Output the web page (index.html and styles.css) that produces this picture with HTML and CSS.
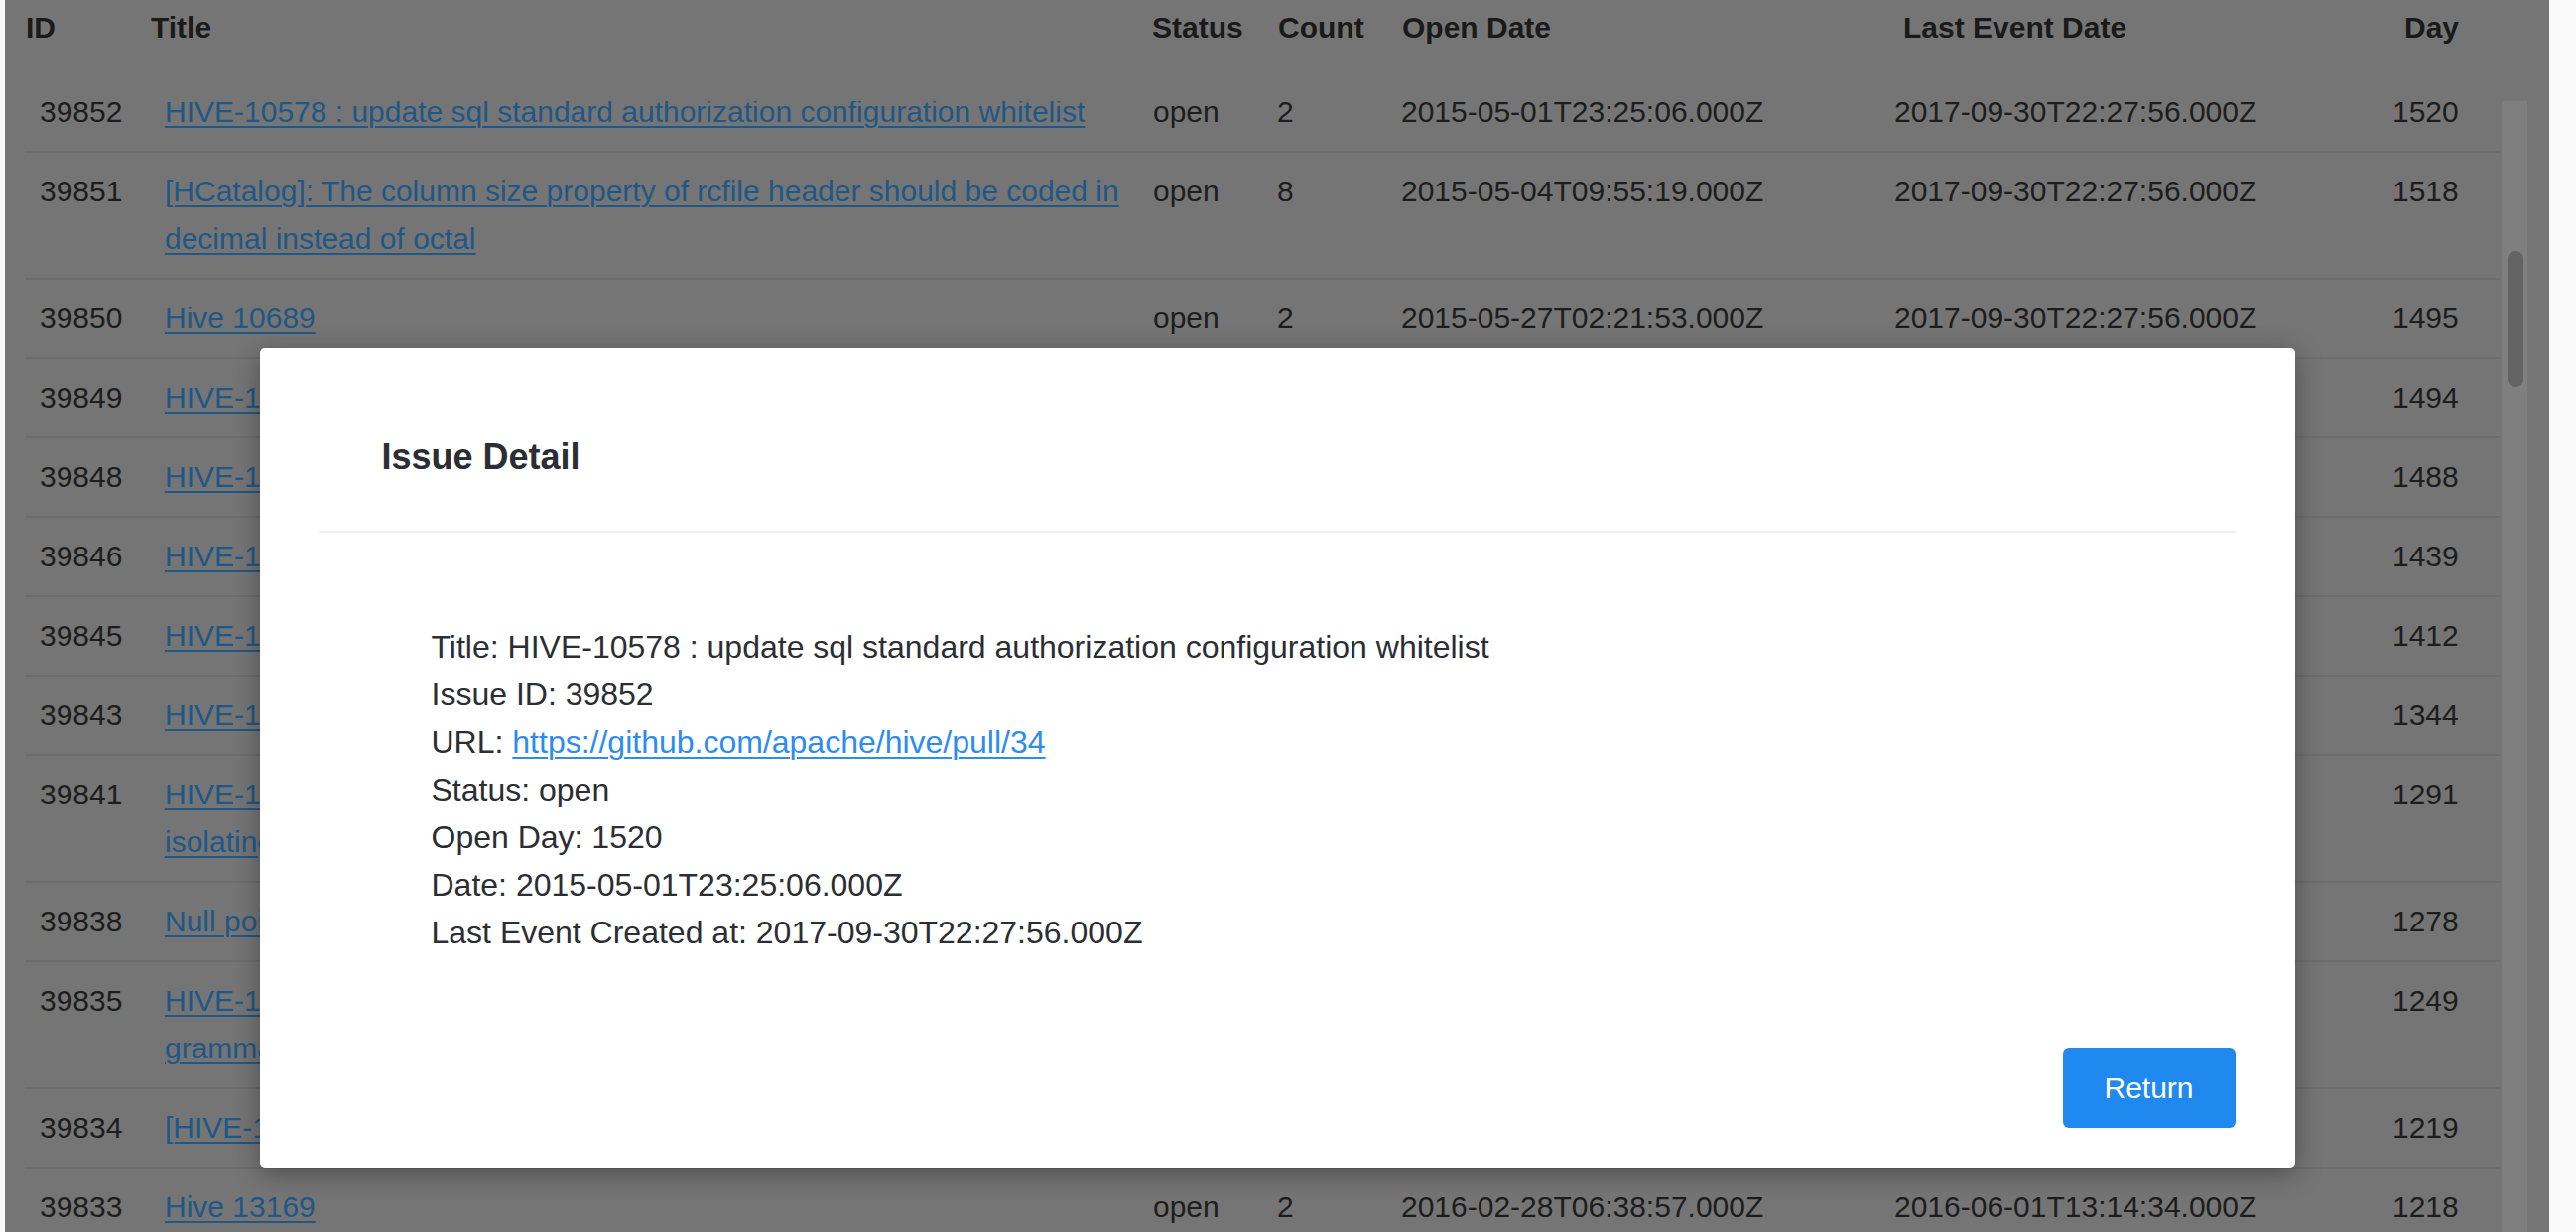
FILE: index.html
```html
<!DOCTYPE html>
<html lang="en">
<head>
<meta charset="utf-8">
<title>Issues</title>
<link rel="stylesheet" href="styles.css">
</head>
<body>
<div class="page">
  <div class="main">
    <div class="thead">
      <div class="th">ID</div>
      <div class="th">Title</div>
      <div class="th">Status</div>
      <div class="th">Count</div>
      <div class="th">Open Date</div>
      <div class="th">Last Event Date</div>
      <div class="th">Day</div>
    </div>
    <div class="tbody-wrap">
      <div class="tbody-clip">
        <table class="grid">
          <colgroup>
            <col class="c-id"><col class="c-title"><col class="c-status"><col class="c-count"><col class="c-open"><col class="c-last"><col class="c-day">
          </colgroup>
          <tbody>
            <tr><td>39852</td><td><a href="#">HIVE-10578 : update sql standard authorization configuration whitelist</a></td><td>open</td><td>2</td><td>2015-05-01T23:25:06.000Z</td><td>2017-09-30T22:27:56.000Z</td><td>1520</td></tr>
            <tr><td>39851</td><td><a href="#">[HCatalog]: The column size property of rcfile header should be coded in decimal instead of octal</a></td><td>open</td><td>8</td><td>2015-05-04T09:55:19.000Z</td><td>2017-09-30T22:27:56.000Z</td><td>1518</td></tr>
            <tr><td>39850</td><td><a href="#">Hive 10689</a></td><td>open</td><td>2</td><td>2015-05-27T02:21:53.000Z</td><td>2017-09-30T22:27:56.000Z</td><td>1495</td></tr>
            <tr><td>39849</td><td><a href="#">HIVE-10695 : Set the default port for Hive metastore</a></td><td>open</td><td>3</td><td>2015-05-28T05:12:40.000Z</td><td>2017-09-30T22:27:56.000Z</td><td>1494</td></tr>
            <tr><td>39848</td><td><a href="#">HIVE-10777 : LLAP: add pre-fragment and per-table cache details</a></td><td>open</td><td>2</td><td>2015-06-03T18:44:02.000Z</td><td>2017-09-30T22:27:56.000Z</td><td>1488</td></tr>
            <tr><td>39846</td><td><a href="#">HIVE-11062 : Remove Exception stacktrace from Log.info</a></td><td>open</td><td>4</td><td>2015-07-22T10:03:17.000Z</td><td>2017-09-30T22:27:56.000Z</td><td>1439</td></tr>
            <tr><td>39845</td><td><a href="#">HIVE-11245 : LLAP: Fix the LLAP to ORC APIs</a></td><td>open</td><td>2</td><td>2015-08-18T07:31:45.000Z</td><td>2017-09-30T22:27:56.000Z</td><td>1412</td></tr>
            <tr><td>39843</td><td><a href="#">HIVE-11502 : Map side aggregation is extremely slow</a></td><td>open</td><td>5</td><td>2015-10-25T13:20:08.000Z</td><td>2017-09-30T22:27:56.000Z</td><td>1344</td></tr>
            <tr><td>39841</td><td><a href="#">HIVE-12008 : Make last two tests added by HIVE-11384 pass when isolating the order of entries</a></td><td>open</td><td>6</td><td>2015-12-17T16:48:33.000Z</td><td>2017-09-30T22:27:56.000Z</td><td>1291</td></tr>
            <tr><td>39838</td><td><a href="#">Null pointer exception in HiveServer2 session</a></td><td>open</td><td>2</td><td>2015-12-30T09:15:21.000Z</td><td>2017-09-30T22:27:56.000Z</td><td>1278</td></tr>
            <tr><td>39835</td><td><a href="#">HIVE-12643 : For self describing InputFormat don't replicate schema grammar for partitions</a></td><td>open</td><td>3</td><td>2016-01-28T11:02:49.000Z</td><td>2017-09-30T22:27:56.000Z</td><td>1249</td></tr>
            <tr><td>39834</td><td><a href="#">[HIVE-12927] HBase metastore: sequences should be one per row</a></td><td>open</td><td>2</td><td>2016-02-27T20:36:11.000Z</td><td>2016-06-01T13:14:34.000Z</td><td>1219</td></tr>
            <tr><td>39833</td><td><a href="#">Hive 13169</a></td><td>open</td><td>2</td><td>2016-02-28T06:38:57.000Z</td><td>2016-06-01T13:14:34.000Z</td><td>1218</td></tr>
          </tbody>
        </table>
      </div>
      <div class="vscroll"><div class="vthumb"></div></div>
    </div>

    <div class="mask">
      <div class="modal">
        <div class="modal-header">Issue Detail</div>
        <div class="modal-body">
          <div class="line">Title: HIVE-10578 : update sql standard authorization configuration whitelist</div>
          <div class="line">Issue ID: 39852</div>
          <div class="line">URL: <a class="url" href="#">https://github.com/apache/hive/pull/34</a></div>
          <div class="line">Status: open</div>
          <div class="line">Open Day: 1520</div>
          <div class="line">Date: 2015-05-01T23:25:06.000Z</div>
          <div class="line">Last Event Created at: 2017-09-30T22:27:56.000Z</div>
        </div>
        <div class="modal-footer">
          <button class="btn-primary" type="button">Return</button>
        </div>
      </div>
    </div>
  </div>
</div>
</body>
</html>
```

FILE: styles.css
```css
* { box-sizing: border-box; }

html, body {
  margin: 0;
  padding: 0;
  height: 100%;
  overflow: hidden;
}

body {
  background: #fafafa;
  font-family: "Liberation Sans", Arial, Helvetica, sans-serif;
  color: #1d1d1d;
}

.page {
  display: flex;
  height: 1242px;
  padding-left: 5px;
}

.main {
  position: relative;
  width: 2564px;
  height: 1242px;
  background: #757575;
  overflow: hidden;
  display: flex;
  flex-direction: column;
}

/* header */
.thead {
  display: grid;
  grid-template-columns: 126px 1009px 127px 125px 505px 505px 1fr;
  height: 102px;
  padding: 4px 0 0 21px;
  flex: none;
}

.th {
  font-size: 30px;
  line-height: 48px;
  font-weight: bold;
  color: #1a1a1a;
  white-space: nowrap;
}

/* body */
.tbody-wrap {
  display: flex;
  flex: 1;
  padding-left: 20px;
  min-height: 0;
}

.tbody-clip {
  width: 2494px;
  overflow: hidden;
  flex: none;
}

.grid {
  width: 2494px;
  table-layout: fixed;
  border-collapse: collapse;
  margin-top: -28px;
}

.c-id { width: 126px; }
.c-title { width: 996px; }
.c-status { width: 125px; }
.c-count { width: 125px; }
.c-open { width: 497px; }
.c-last { width: 502px; }
.c-day { width: 123px; }

.grid td {
  padding: 15px 15px;
  font-size: 30px;
  line-height: 48px;
  vertical-align: top;
  color: #1d1d1d;
  border-bottom: 2px solid #6c6c6c;
}

.grid a {
  color: #1f5786;
  text-decoration: underline;
  text-decoration-thickness: 2px;
  text-underline-offset: 4px;
}

.vscroll {
  flex: none;
  width: 26px;
  margin-left: 2px;
  background: #7f7f7f;
  position: relative;
}

.vthumb {
  position: absolute;
  left: 6px;
  top: 151px;
  width: 16px;
  height: 137px;
  border-radius: 8px;
  background: #636363;
}

/* dialog */
.mask {
  position: absolute;
  inset: 0;
}

.modal {
  width: 2051px;
  margin: 351px auto 0;
  padding: 0 60px 40px 59px;
  background: #fff;
  border-radius: 5px;
  box-shadow: 0 6px 26px rgba(0, 0, 0, 0.35);
  display: flex;
  flex-direction: column;
  color: #2b2e33;
}

.modal-header {
  padding: 86px 64px 50px;
  font-size: 36px;
  line-height: 48px;
  font-weight: bold;
  border-bottom: 2px solid #efefef;
}

.modal-body {
  padding: 91px 0 0 114px;
  font-size: 32px;
  line-height: 48px;
}

.url {
  color: #2d8cf0;
  text-decoration: underline;
  text-decoration-thickness: 2px;
  text-underline-offset: 4px;
}

.modal-footer {
  display: flex;
  justify-content: flex-end;
  padding-top: 93px;
}

.btn-primary {
  width: 174px;
  height: 80px;
  border: none;
  border-radius: 6px;
  background: #1f89f0;
  color: #fff;
  font-family: "Liberation Sans", Arial, Helvetica, sans-serif;
  font-size: 30px;
  padding: 0;
}
```
